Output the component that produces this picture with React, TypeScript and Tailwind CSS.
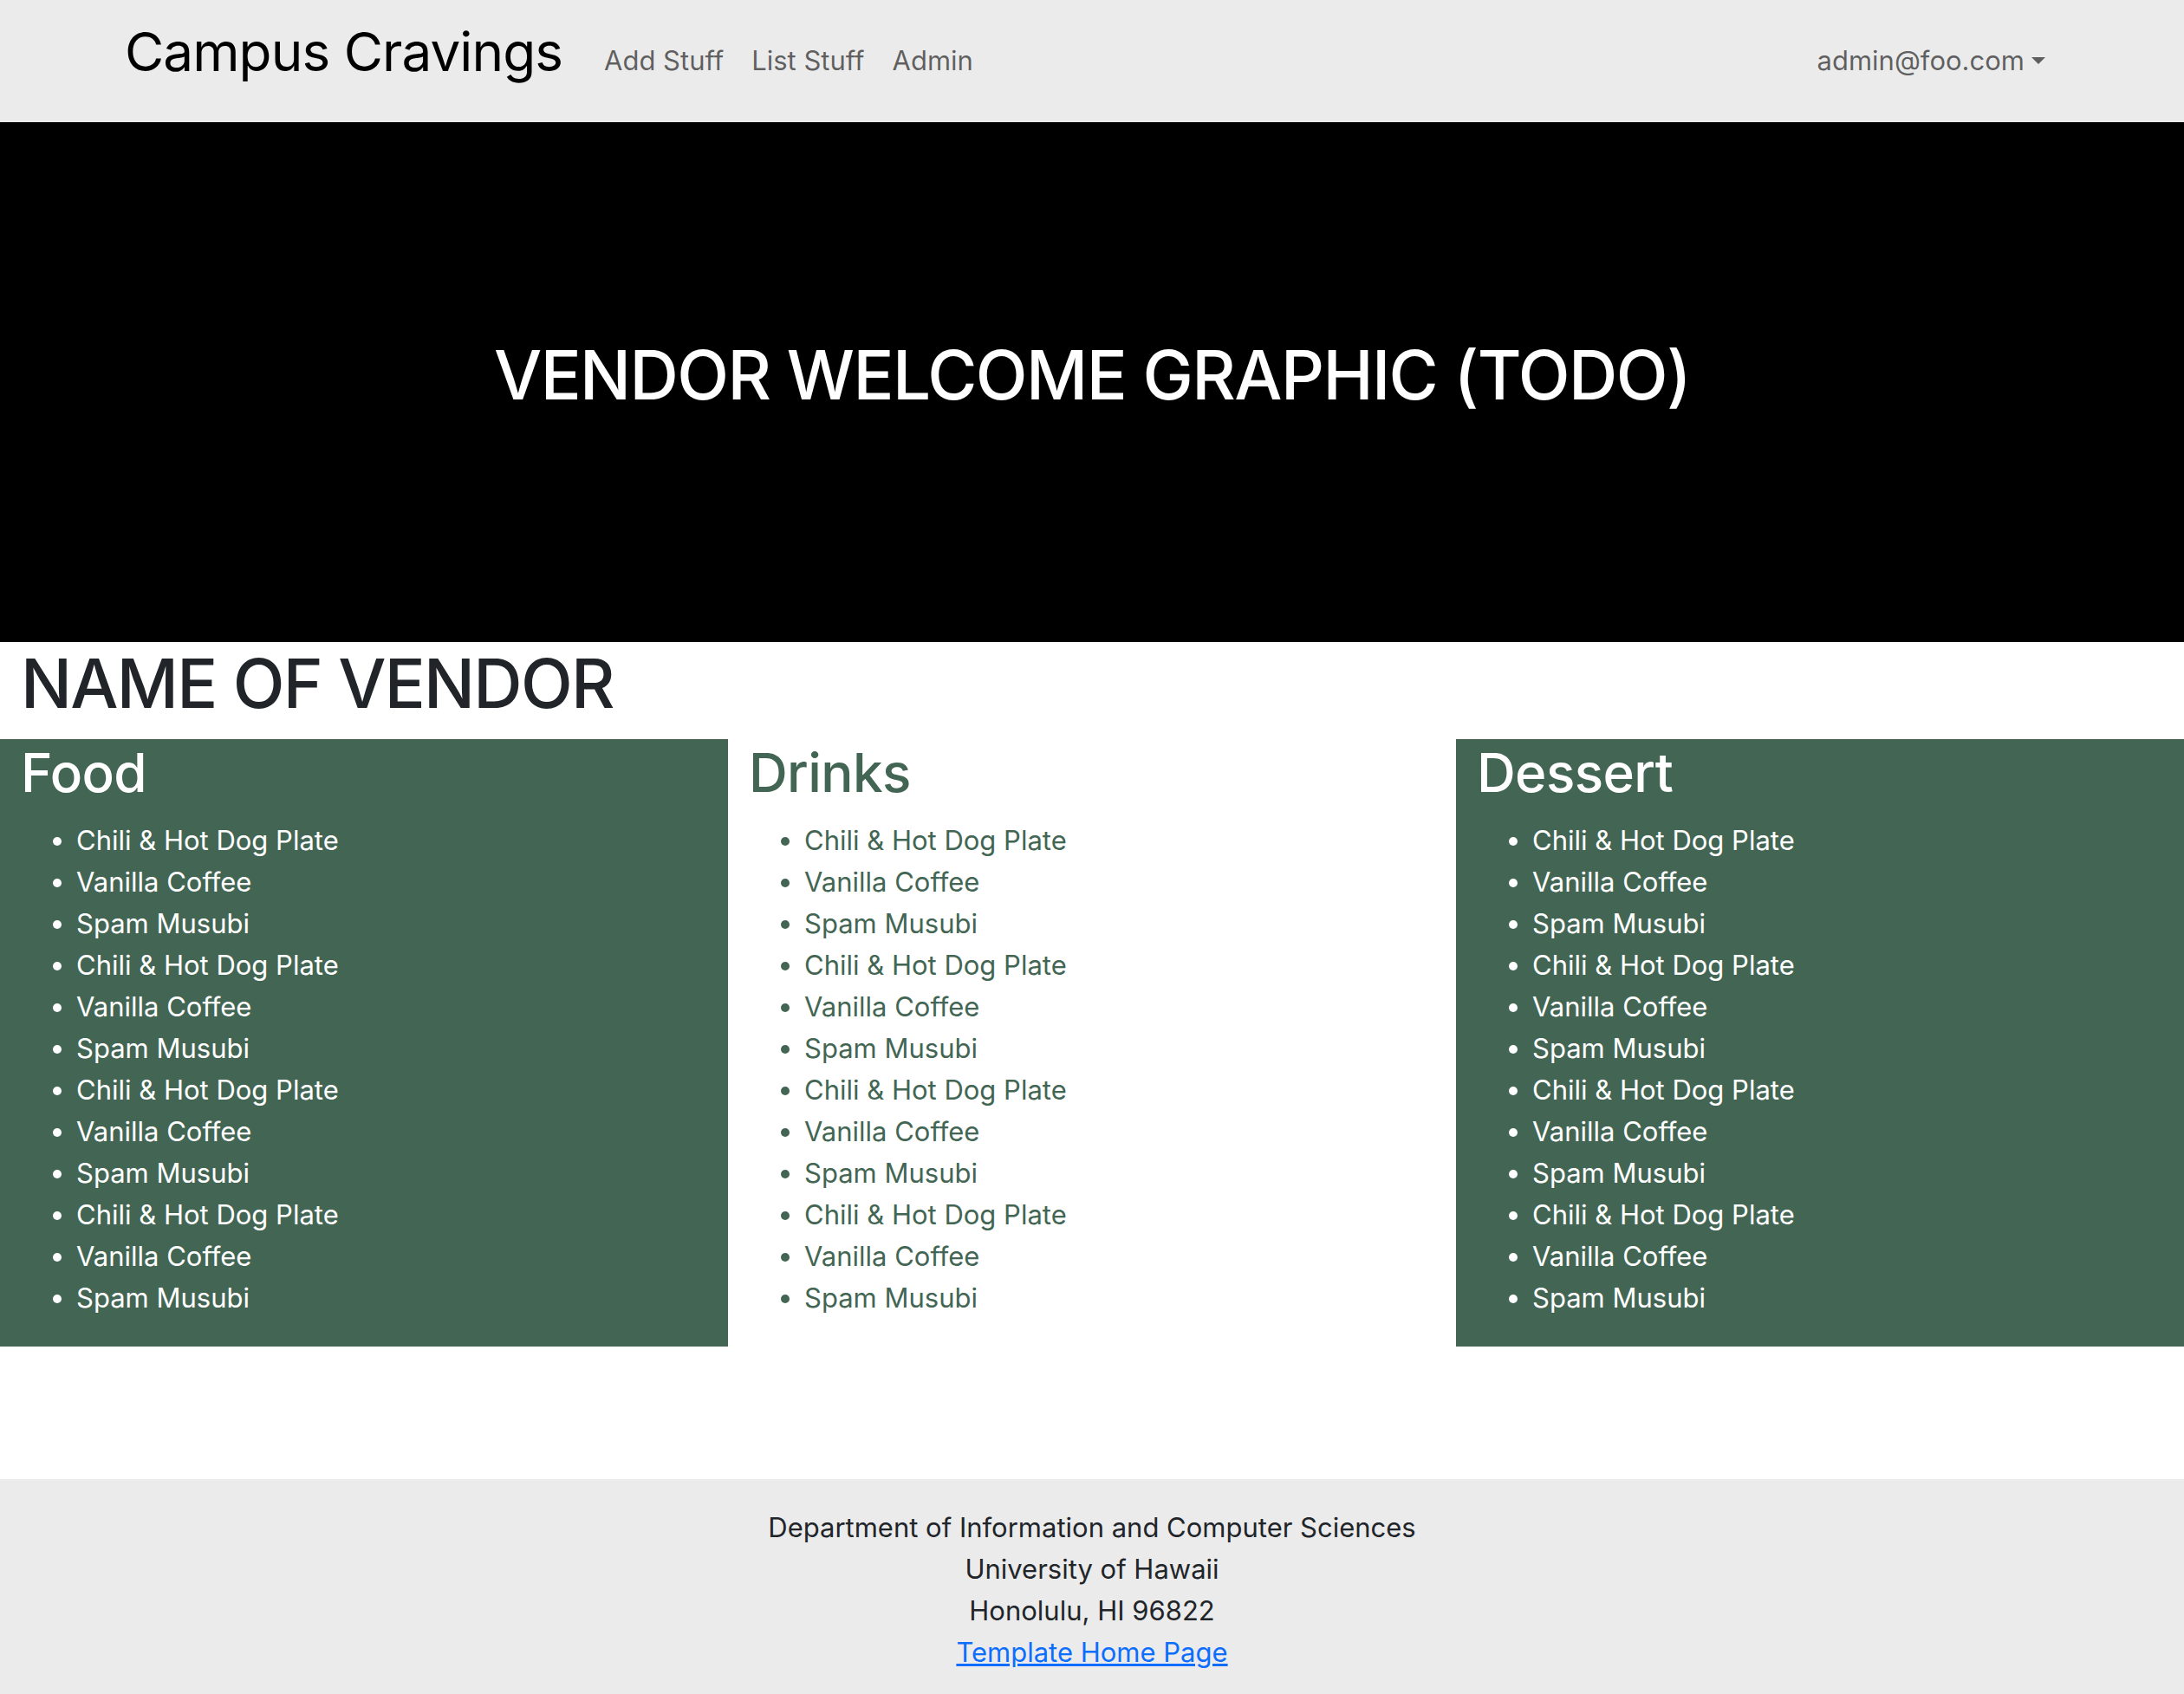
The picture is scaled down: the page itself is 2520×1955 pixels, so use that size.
const items = [
  'Chili & Hot Dog Plate',
  'Vanilla Coffee',
  'Spam Musubi',
  'Chili & Hot Dog Plate',
  'Vanilla Coffee',
  'Spam Musubi',
  'Chili & Hot Dog Plate',
  'Vanilla Coffee',
  'Spam Musubi',
  'Chili & Hot Dog Plate',
  'Vanilla Coffee',
  'Spam Musubi',
];

function MenuColumn({ title, dark }: { title: string; dark: boolean }) {
  return (
    <div className={dark ? 'bg-[#436654] text-white px-6' : 'bg-white text-[#436654] px-6'}>
      <h2 className="text-[62px] leading-[77px] font-medium tracking-[-0.01em] mb-4">{title}</h2>
      <ul className="list-disc pl-16 mb-8">
        {items.map((item, i) => (
          <li key={i} className="text-[31px] leading-[48px]">{item}</li>
        ))}
      </ul>
    </div>
  );
}

export default function App() {
  return (
    <div className="min-h-[1955px] flex flex-col bg-white text-[#212529] font-['Inter','Noto_Sans',sans-serif]">
      <nav className="h-[141px] bg-[#ebebeb] flex items-center">
        <div className="w-[2280px] mx-auto px-6 flex items-center justify-between">
          <div className="flex items-center">
            <a href="#" className="text-[62px] leading-[1.2] tracking-[-0.015em] text-black mr-8 mb-5">Campus Cravings</a>
            <a href="#" className="px-4 text-[31px] leading-[48px] text-black/60">Add Stuff</a>
            <a href="#" className="px-4 text-[31px] leading-[48px] text-black/60">List Stuff</a>
            <a href="#" className="px-4 text-[31px] leading-[48px] text-black/60">Admin</a>
          </div>
          <a href="#" className="px-4 text-[31px] leading-[48px] text-black/60 flex items-center">
            admin@foo.com
            <span className="ml-2 inline-block w-0 h-0 border-t-[8px] border-x-[8px] border-x-transparent border-t-black/60"></span>
          </a>
        </div>
      </nav>

      <div className="h-[600px] bg-black flex items-center justify-center">
        <h1 className="text-white text-[78px] leading-[96px] font-medium tracking-[-0.02em] mb-4">VENDOR WELCOME GRAPHIC (TODO)</h1>
      </div>

      <div className="px-6">
        <h1 className="text-[78px] leading-[96px] font-medium tracking-[-0.022em] mb-4">NAME OF VENDOR</h1>
      </div>

      <div className="grid grid-cols-3">
        <MenuColumn title="Food" dark={true} />
        <MenuColumn title="Drinks" dark={false} />
        <MenuColumn title="Dessert" dark={true} />
      </div>

      <footer className="mt-auto bg-[#ebebeb] pt-8 pb-6 text-center text-[31px] leading-[48px]">
        Department of Information and Computer Sciences
        <br />
        University of Hawaii
        <br />
        Honolulu, HI 96822
        <br />
        <a href="#" className="text-[#0d6efd] underline">Template Home Page</a>
      </footer>
    </div>
  );
}
